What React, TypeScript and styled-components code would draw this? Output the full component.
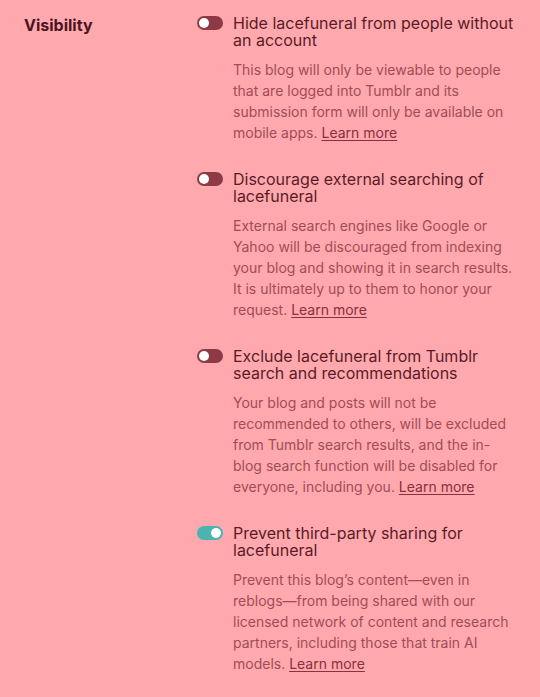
import React from "react";
import styled, { createGlobalStyle } from "styled-components";

const GlobalStyle = createGlobalStyle`
    html, body {
        margin: 0;
        padding: 0;
        background: #ffa9ae;
    }
    body {
        font-family: Inter, "Noto Sans", sans-serif;
    }
`;

const Page = styled.div`
    display: grid;
    grid-template-columns: 197px 1fr;
    padding: 15px 16px 0 0;
    min-height: 697px;
    box-sizing: border-box;
`;

const Label = styled.h2`
    margin: 0;
    padding: 1px 0 0 24px;
    font-size: 16px;
    font-weight: 700;
    color: #4a1420;
    line-height: 19px;
`;

const List = styled.div`
    display: flex;
    flex-direction: column;
    gap: 28px;
`;

const Option = styled.div`
    display: grid;
    grid-template-columns: 24px 1fr;
    column-gap: 12px;
`;

const Toggle = styled.span<{ $on?: boolean }>`
    position: relative;
    display: block;
    width: 26px;
    height: 14px;
    margin-top: 1px;
    border-radius: 7px;
    background: ${(p) => (p.$on ? "#4bb3b0" : "#8c3a45")};

    &::after {
        content: "";
        position: absolute;
        top: 2px;
        left: ${(p) => (p.$on ? "14px" : "2px")};
        width: 10px;
        height: 10px;
        border-radius: 50%;
        background: #ffffff;
    }
`;

const Title = styled.div`
    font-size: 16px;
    line-height: 17px;
    color: #5a1b26;
`;

const Desc = styled.p`
    margin: 10px 0 0;
    padding-right: 8px;
    font-size: 14px;
    line-height: 21px;
    color: #a24c56;
`;

const More = styled.a`
    color: #8a2f3b;
    text-decoration: underline;
    text-underline-offset: 2px;
`;

const options = [
    {
        title: "Hide lacefuneral from people without an account",
        desc: "This blog will only be viewable to people that are logged into Tumblr and its submission form will only be available on mobile apps.",
        on: false,
    },
    {
        title: "Discourage external searching of lacefuneral",
        desc: "External search engines like Google or Yahoo will be discouraged from indexing your blog and showing it in search results. It is ultimately up to them to honor your request.",
        on: false,
    },
    {
        title: "Exclude lacefuneral from Tumblr search and recommendations",
        desc: "Your blog and posts will not be recommended to others, will be excluded from Tumblr search results, and the in-blog search function will be disabled for everyone, including you.",
        on: false,
    },
    {
        title: "Prevent third-party sharing for lacefuneral",
        desc: "Prevent this blog\u2019s content\u2014even in reblogs\u2014from being shared with our licensed network of content and research partners, including those that train AI models.",
        on: true,
    },
];

export default function App(): React.ReactElement {
    return (
        <>
            <GlobalStyle />
            <Page>
                <Label>Visibility</Label>
                <List>
                    {options.map((o) => (
                        <Option key={o.title}>
                            <Toggle $on={o.on} />
                            <div>
                                <Title>{o.title}</Title>
                                <Desc>
                                    {o.desc} <More>Learn more</More>
                                </Desc>
                            </div>
                        </Option>
                    ))}
                </List>
            </Page>
        </>
    );
}
